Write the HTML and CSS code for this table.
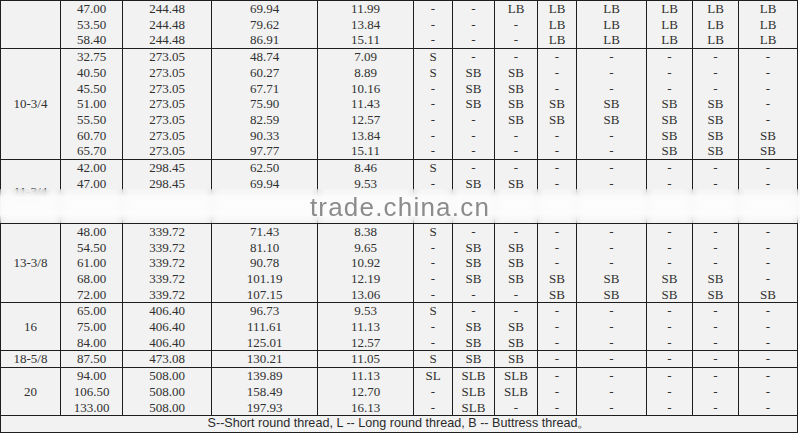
FILE: index.html
```html
<!DOCTYPE html>
<html>
<head>
<meta charset="utf-8">
<link rel="stylesheet" href="styles.css">
</head>
<body>
<div class="page">
<table class="spec">
<colgroup>
<col class="c1"><col class="c2"><col class="c3"><col class="c4"><col class="c5"><col class="c6"><col class="c7"><col class="c8"><col class="c9"><col class="c10"><col class="c11"><col class="c12"><col class="c13">
</colgroup>
<tbody>
<tr>
<td class="lbl"></td>
<td>47.00<br>53.50<br>58.40</td>
<td>244.48<br>244.48<br>244.48</td>
<td>69.94<br>79.62<br>86.91</td>
<td>11.99<br>13.84<br>15.11</td>
<td>-<br>-<br>-</td>
<td>-<br>-<br>-</td>
<td>LB<br>-<br>-</td>
<td>LB<br>LB<br>LB</td>
<td>LB<br>LB<br>LB</td>
<td>LB<br>LB<br>LB</td>
<td>LB<br>LB<br>LB</td>
<td>LB<br>LB<br>LB</td>
</tr>
<tr>
<td class="lbl">10-3/4</td>
<td>32.75<br>40.50<br>45.50<br>51.00<br>55.50<br>60.70<br>65.70</td>
<td>273.05<br>273.05<br>273.05<br>273.05<br>273.05<br>273.05<br>273.05</td>
<td>48.74<br>60.27<br>67.71<br>75.90<br>82.59<br>90.33<br>97.77</td>
<td>7.09<br>8.89<br>10.16<br>11.43<br>12.57<br>13.84<br>15.11</td>
<td>S<br>S<br>-<br>-<br>-<br>-<br>-</td>
<td>-<br>SB<br>SB<br>SB<br>-<br>-<br>-</td>
<td>-<br>SB<br>SB<br>SB<br>SB<br>-<br>-</td>
<td>-<br>-<br>-<br>SB<br>SB<br>-<br>-</td>
<td>-<br>-<br>-<br>SB<br>SB<br>-<br>-</td>
<td>-<br>-<br>-<br>SB<br>SB<br>SB<br>SB</td>
<td>-<br>-<br>-<br>SB<br>SB<br>SB<br>SB</td>
<td>-<br>-<br>-<br>-<br>-<br>SB<br>SB</td>
</tr>
<tr>
<td class="lbl">11-3/4</td>
<td>42.00<br>47.00<br>&nbsp;<br>&nbsp;</td>
<td>298.45<br>298.45<br>&nbsp;<br>&nbsp;</td>
<td>62.50<br>69.94<br>&nbsp;<br>&nbsp;</td>
<td>8.46<br>9.53<br>&nbsp;<br>&nbsp;</td>
<td>S<br>-<br>&nbsp;<br>&nbsp;</td>
<td>-<br>SB<br>&nbsp;<br>&nbsp;</td>
<td>-<br>SB<br>&nbsp;<br>&nbsp;</td>
<td>-<br>-<br>&nbsp;<br>&nbsp;</td>
<td>-<br>-<br>&nbsp;<br>&nbsp;</td>
<td>-<br>-<br>&nbsp;<br>&nbsp;</td>
<td>-<br>-<br>&nbsp;<br>&nbsp;</td>
<td>-<br>-<br>&nbsp;<br>&nbsp;</td>
</tr>
<tr>
<td class="lbl">13-3/8</td>
<td>48.00<br>54.50<br>61.00<br>68.00<br>72.00</td>
<td>339.72<br>339.72<br>339.72<br>339.72<br>339.72</td>
<td>71.43<br>81.10<br>90.78<br>101.19<br>107.15</td>
<td>8.38<br>9.65<br>10.92<br>12.19<br>13.06</td>
<td>S<br>-<br>-<br>-<br>-</td>
<td>-<br>SB<br>SB<br>SB<br>-</td>
<td>-<br>SB<br>SB<br>SB<br>-</td>
<td>-<br>-<br>-<br>SB<br>SB</td>
<td>-<br>-<br>-<br>SB<br>SB</td>
<td>-<br>-<br>-<br>SB<br>SB</td>
<td>-<br>-<br>-<br>SB<br>SB</td>
<td>-<br>-<br>-<br>-<br>SB</td>
</tr>
<tr>
<td class="lbl">16</td>
<td>65.00<br>75.00<br>84.00</td>
<td>406.40<br>406.40<br>406.40</td>
<td>96.73<br>111.61<br>125.01</td>
<td>9.53<br>11.13<br>12.57</td>
<td>S<br>-<br>-</td>
<td>-<br>SB<br>SB</td>
<td>-<br>SB<br>SB</td>
<td>-<br>-<br>-</td>
<td>-<br>-<br>-</td>
<td>-<br>-<br>-</td>
<td>-<br>-<br>-</td>
<td>-<br>-<br>-</td>
</tr>
<tr>
<td class="lbl">18-5/8</td>
<td>87.50</td>
<td>473.08</td>
<td>130.21</td>
<td>11.05</td>
<td>S</td>
<td>SB</td>
<td>SB</td>
<td>-</td>
<td>-</td>
<td>-</td>
<td>-</td>
<td>-</td>
</tr>
<tr>
<td class="lbl">20</td>
<td>94.00<br>106.50<br>133.00</td>
<td>508.00<br>508.00<br>508.00</td>
<td>139.89<br>158.49<br>197.93</td>
<td>11.13<br>12.70<br>16.13</td>
<td>SL<br>-<br>-</td>
<td>SLB<br>SLB<br>SLB</td>
<td>SLB<br>SLB<br>-</td>
<td>-<br>-<br>-</td>
<td>-<br>-<br>-</td>
<td>-<br>-<br>-</td>
<td>-<br>-<br>-</td>
<td>-<br>-<br>-</td>
</tr>
<tr>
<td class="note" colspan="13">S--Short round thread, L -- Long round thread, B -- Buttress thread。</td>
</tr>
</tbody>
</table>
<div class="watermark"><span>trade.china.cn</span></div>
</div>
</body>
</html>
```

FILE: styles.css
```css
html, body {
  margin: 0;
  padding: 0;
  background: #ffffff;
}

.page {
  position: relative;
  width: 800px;
  height: 434px;
  overflow: hidden;
}

.spec {
  border-collapse: collapse;
  table-layout: fixed;
  width: 798px;
  font-family: "Liberation Serif", "Times New Roman", serif;
  font-size: 13px;
  line-height: 15.7px;
  color: #303030;
  background: #f2f2f2;
}

.spec td {
  border: 1px solid #1e1e1e;
  padding: 0;
  text-align: center;
  vertical-align: top;
  white-space: nowrap;
}

.spec td.lbl {
  vertical-align: middle;
}

.spec td.note {
  font-family: "Liberation Sans", Arial, sans-serif;
  font-size: 12.6px;
  color: #2a2a2a;
  vertical-align: middle;
}

.c1 { width: 60px; }
.c2 { width: 62px; }
.c3 { width: 89px; }
.c4 { width: 106px; }
.c5 { width: 96px; }
.c6 { width: 39px; }
.c7 { width: 42px; }
.c8 { width: 43px; }
.c9 { width: 39px; }
.c10 { width: 70px; }
.c11 { width: 46px; }
.c12 { width: 46px; }
.c13 { width: 59px; }

.watermark {
  position: absolute;
  left: 0;
  right: 0;
  top: 189px;
  height: 34px;
  background: linear-gradient(to bottom,
    rgba(252, 252, 252, 0.3) 0%,
    rgba(252, 252, 252, 0.93) 25%,
    rgba(252, 252, 252, 0.95) 75%,
    rgba(250, 250, 250, 0.4) 100%);
  backdrop-filter: blur(3px);
  display: flex;
  justify-content: center;
  align-items: flex-end;
}

.watermark span {
  font-family: "Liberation Sans", Arial, sans-serif;
  font-size: 26px;
  letter-spacing: 1.2px;
  line-height: 26px;
  color: #8c8c8c;
  margin-bottom: 3px;
}
```
